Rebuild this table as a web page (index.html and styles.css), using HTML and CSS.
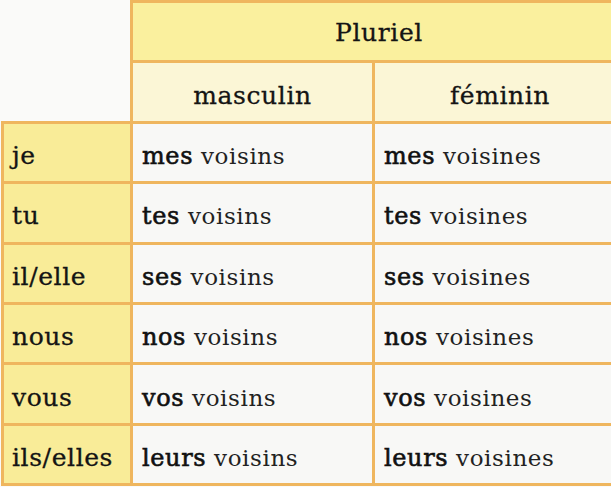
FILE: index.html
```html
<!DOCTYPE html>
<html lang="fr">
<head>
<meta charset="utf-8">
<title>Pluriel</title>
<link rel="stylesheet" href="styles.css">
</head>
<body>
<table class="conj">
  <colgroup>
    <col class="c-pron">
    <col class="c-masc">
    <col class="c-fem">
  </colgroup>
  <tr class="r-title">
    <td class="blank"></td>
    <th class="title" colspan="2">Pluriel</th>
  </tr>
  <tr class="r-sub">
    <td class="blank"></td>
    <th class="sub">masculin</th>
    <th class="sub">féminin</th>
  </tr>
  <tr><th class="pron">je</th><td><b>mes</b> voisins</td><td><b>mes</b> voisines</td></tr>
  <tr><th class="pron">tu</th><td><b>tes</b> voisins</td><td><b>tes</b> voisines</td></tr>
  <tr><th class="pron">il/elle</th><td><b>ses</b> voisins</td><td><b>ses</b> voisines</td></tr>
  <tr><th class="pron">nous</th><td><b>nos</b> voisins</td><td><b>nos</b> voisines</td></tr>
  <tr><th class="pron">vous</th><td><b>vos</b> voisins</td><td><b>vos</b> voisines</td></tr>
  <tr><th class="pron">ils/elles</th><td><b>leurs</b> voisins</td><td><b>leurs</b> voisines</td></tr>
</table>
</body>
</html>
```
FILE: styles.css
```css
html, body {
  margin: 0;
  padding: 0;
  background: #fafaf9;
  overflow: hidden;
}
body {
  width: 611px;
  height: 487px;
  font-family: "DejaVu Serif", serif;
  color: #141414;
}
.conj {
  border-collapse: collapse;
  table-layout: fixed;
  width: 624px;
  margin: 0 0 0 1px;
}
.c-pron { width: 129px; }
.c-masc { width: 242px; }
.c-fem { width: 253px; }
.conj th, .conj td {
  border: 3px solid #efb65e;
  padding: 0 0 0 10px;
  text-align: left;
  font-weight: normal;
  box-sizing: border-box;
  white-space: nowrap;
}
.conj tr { height: 60.4px; }
.conj .blank {
  border: none;
  background: #fafaf9;
}
.conj .title {
  background: #faf09e;
  text-align: center;
  padding: 2px 0 0 0;
  font-size: 25px;
  letter-spacing: 0.6px;
  -webkit-text-stroke: 0.3px #141414;
}
.conj .sub {
  background: #fbf6d6;
  text-align: center;
  padding: 7px 0 0 0;
  font-size: 25px;
  letter-spacing: 0.6px;
  -webkit-text-stroke: 0.3px #141414;
}
.conj .pron {
  background: #f9ec98;
  font-size: 25px;
  letter-spacing: 0.6px;
  padding-top: 6px;
  padding-left: 8px;
  -webkit-text-stroke: 0.3px #141414;
}
.conj td {
  background: #f8f8f6;
  font-size: 23px;
  letter-spacing: 0.6px;
  padding-top: 7px;
  padding-left: 9px;
  color: #222;
}
.conj td b {
  font-weight: normal;
  font-size: 24px;
  color: #111;
  -webkit-text-stroke: 0.6px #111;
}
```
